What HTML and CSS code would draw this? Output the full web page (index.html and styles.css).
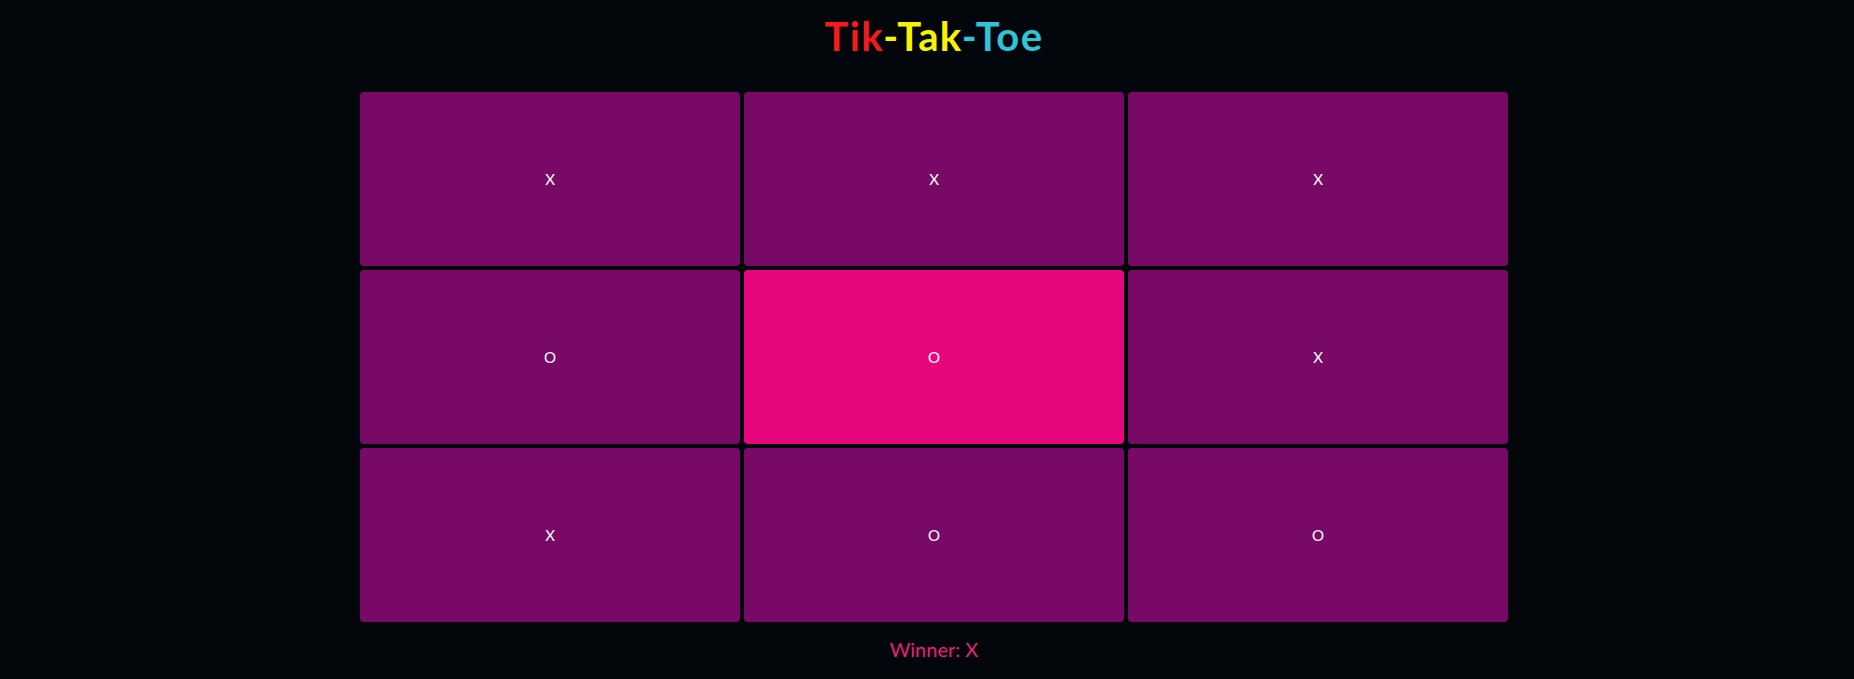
FILE: index.html
```html
<!DOCTYPE html>
<html lang="en">
<head>
<meta charset="utf-8">
<title>Tik-Tak-Toe</title>
<link rel="stylesheet" href="styles.css">
</head>
<body>
<div class="app">
  <h1 class="title"><span class="red">Tik</span><span class="yellow">-Tak</span><span class="cyan">-Toe</span></h1>
  <div class="board">
    <div class="cell">X</div>
    <div class="cell">X</div>
    <div class="cell">X</div>
    <div class="cell">O</div>
    <div class="cell active">O</div>
    <div class="cell">X</div>
    <div class="cell">X</div>
    <div class="cell">O</div>
    <div class="cell">O</div>
  </div>
  <p class="winner">Winner: X</p>
</div>
</body>
</html>
```
FILE: styles.css
```css
html, body {
  margin: 0;
  padding: 0;
  background: #03060b;
}
.app {
  padding-left: 14px;
  display: flex;
  flex-direction: column;
  align-items: center;
  font-family: Lato, "Noto Sans", sans-serif;
}
.title {
  margin: 12px 0 32px;
  font-size: 40px;
  line-height: 48px;
  font-weight: 700;
  letter-spacing: 1.4px;
}
.red { color: #f21a1d; }
.yellow { color: #f7f300; }
.cyan { color: #2ec3d5; }
.board {
  display: grid;
  grid-template-columns: repeat(3, 380px);
  grid-auto-rows: 174px;
  gap: 4px;
}
.cell {
  background: #790967;
  border-radius: 4px;
  color: #ffffff;
  font-size: 15px;
  display: flex;
  align-items: center;
  justify-content: center;
}
.cell.active {
  background: #e8067f;
}
.winner {
  margin: 15px 0 0;
  font-size: 20px;
  line-height: 24px;
  color: #e8207c;
}
```
